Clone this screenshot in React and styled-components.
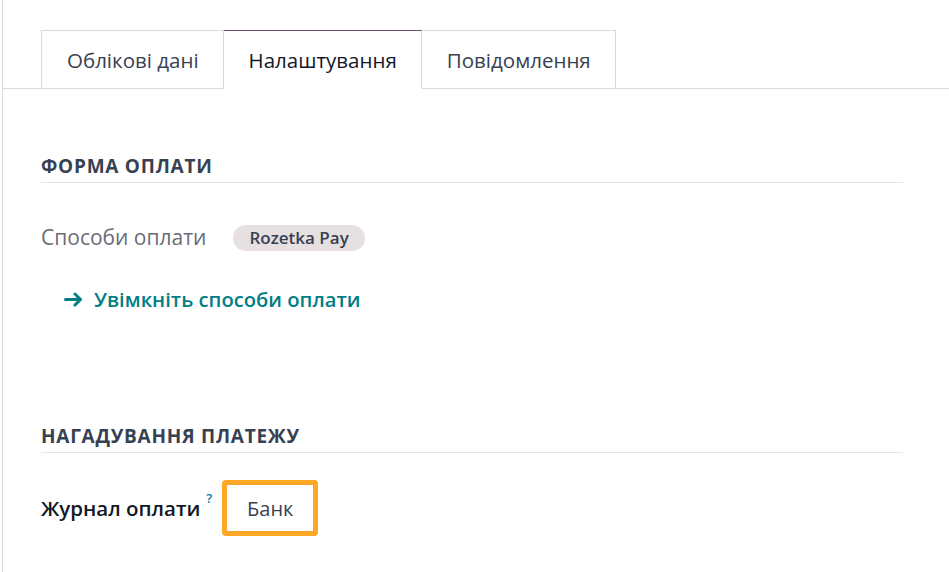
import React from "react";
import styled, { createGlobalStyle } from "styled-components";

const GlobalStyle = createGlobalStyle`
  html, body {
    margin: 0;
    padding: 0;
    background: #ffffff;
    font-family: "Open Sans", "Noto Sans", sans-serif;
    color: #374151;
  }
`;

const Sheet = styled.div`
  margin-left: 2px;
  min-height: 572px;
  border-left: 1px solid #d8dadd;
  box-sizing: border-box;
`;

const TabBar = styled.div`
  display: flex;
  padding: 30px 0 0 38px;
  border-bottom: 1px solid #d8dadd;
`;

const Tab = styled.div`
  box-sizing: border-box;
  display: flex;
  align-items: center;
  padding: 0 24px 0 25px;
  font-size: 20.5px;
  color: ${(p) => (p.$active ? "#111827" : "#374151")};
  background: #fff;
  border: 1px solid #d8dadd;
  border-top-color: ${(p) => (p.$active ? "#714b67" : "#d8dadd")};
  border-left: ${(p) => (p.$first ? "1px solid #d8dadd" : "none")};
  margin-bottom: ${(p) => (p.$active ? "-1px" : "0")};
  height: ${(p) => (p.$active ? "59px" : "58px")};
  border-bottom: ${(p) => (p.$active ? "1px solid #fff" : "none")};
`;

const Content = styled.div`
  padding: 64px 46px 0 38px;
`;

const SectionTitle = styled.div`
  font-size: 19px;
  line-height: 26px;
  font-weight: 700;
  color: #374151;
  letter-spacing: 0.75px;
  padding-bottom: 3px;
  border-bottom: 1px solid #e2e4e7;
  margin-top: ${(p) => p.$top}px;
`;

const Row = styled.div`
  display: flex;
  align-items: center;
  margin-top: ${(p) => p.$top}px;
`;

const Label = styled.div`
  font-size: ${(p) => (p.$strong ? "20.5px" : "21px")};
  line-height: 29px;
  color: ${(p) => (p.$strong ? "#111827" : "#6b6b76")};
  font-weight: ${(p) => (p.$strong ? 600 : 400)};
  display: flex;
  align-items: flex-start;
`;

const Help = styled.sup`
  font-size: 13px;
  line-height: 13px;
  font-weight: 600;
  color: #0180a5;
  margin-left: 6px;
  position: relative;
  top: -2px;
`;

const Badge = styled.span`
  margin-left: 27px;
  display: inline-flex;
  align-items: center;
  height: 26px;
  padding: 0 16px;
  border-radius: 13px;
  background: #e7e0e0;
  color: #374151;
  font-size: 17px;
  font-weight: 600;
`;

const Link = styled.a`
  display: flex;
  align-items: center;
  gap: 10px;
  margin-left: 23px;
  color: #017e84;
  font-size: 20.2px;
  line-height: 28px;
  font-weight: 600;
  text-decoration: none;
`;

const ValueBox = styled.div`
  box-sizing: border-box;
  margin-left: 10px;
  width: 96px;
  height: 56px;
  border: 5px solid #fda726;
  border-radius: 4px;
  display: flex;
  align-items: center;
  justify-content: center;
  font-size: 20px;
  color: #374151;
`;

const ArrowIcon = () => (
  <svg width="20" height="15" viewBox="0 0 20 15">
    <path
      d="M1.5 7.5h15M11 2l5.5 5.5L11 13"
      fill="none"
      stroke="#017e84"
      strokeWidth="3"
      strokeLinecap="round"
      strokeLinejoin="round"
    />
  </svg>
);

export default function App() {
  return (
    <>
      <GlobalStyle />
      <Sheet>
        <TabBar>
          <Tab $first>Облікові дані</Tab>
          <Tab $active>Налаштування</Tab>
          <Tab>Повідомлення</Tab>
        </TabBar>
        <Content>
          <SectionTitle $top={0}>ФОРМА ОПЛАТИ</SectionTitle>
          <Row $top={40}>
            <Label>Способи оплати</Label>
            <Badge>Rozetka Pay</Badge>
          </Row>
          <Row $top={33}>
            <Link href="#">
              <ArrowIcon />
              Увімкніть способи оплати
            </Link>
          </Row>
          <SectionTitle $top={110}>НАГАДУВАННЯ ПЛАТЕЖУ</SectionTitle>
          <Row $top={27}>
            <Label $strong>
              Журнал оплати<Help>?</Help>
            </Label>
            <ValueBox>Банк</ValueBox>
          </Row>
        </Content>
      </Sheet>
    </>
  );
}
